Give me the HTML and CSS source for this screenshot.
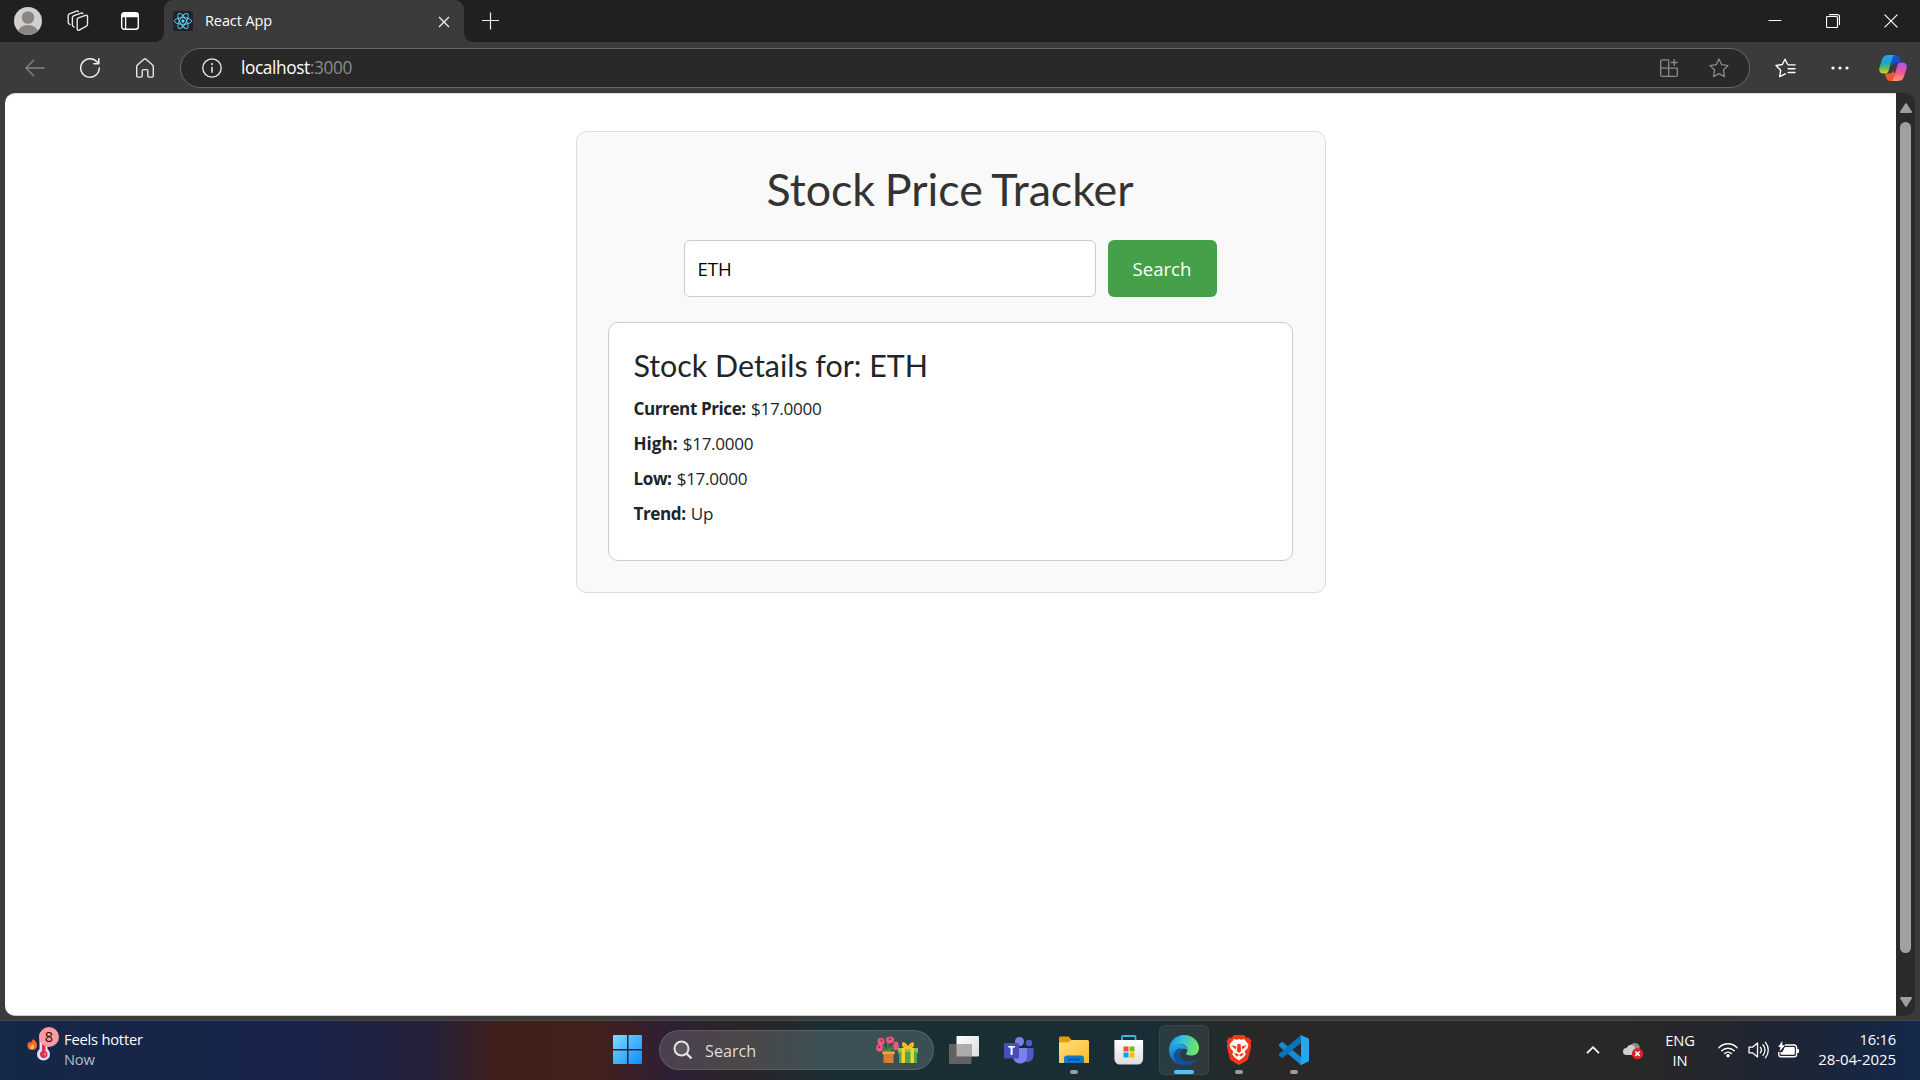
FILE: index.html
```html
<!DOCTYPE html>
<html lang="en">
<head>
<meta charset="utf-8">
<title>React App</title>
<link rel="stylesheet" href="styles.css">
</head>
<body>
<div class="browser">
  <header class="titlebar">
    <div class="cell avatar"><svg width="28" height="28" viewBox="0 0 28 28"><defs><clipPath id="av"><circle cx="14" cy="14" r="14"/></clipPath></defs><g clip-path="url(#av)"><rect width="28" height="28" fill="#d2d0ce"/><circle cx="14" cy="10.5" r="6.3" fill="#8a8683"/><ellipse cx="14" cy="26" rx="10.3" ry="8" fill="#8a8683"/></g></svg></div>
    <div class="cell spaces"><svg width="22" height="22" viewBox="0 0 22 22" fill="none" stroke="#e8e8e8" stroke-width="1.4" stroke-linejoin="round" stroke-linecap="round"><path d="M10.8 8.2 18.6 5.3c1-.3 1.9.2 1.9 1.2v8c0 .8-.4 1.3-1.1 1.6l-7.2 4c-1 .5-2 0-2-1V10c0-.9.1-1.5.6-1.8ZM7 17l-.9-.8c-.5-.4-.7-.8-.7-1.5V7.6c0-.8.4-1.4 1.1-1.7L14 3.2c.9-.3 1.5-.1 1.9.5M3 14.5l-1-.7c-.6-.4-.8-.8-.8-1.5V5.5c0-.8.4-1.3 1.1-1.6L9.5 1.1c.9-.3 1.5-.1 1.9.5"/></svg></div>
    <div class="cell vtabs"><svg width="18" height="18" viewBox="0 0 18 18"><rect x=".7" y=".7" width="16.6" height="16.6" rx="2.5" fill="none" stroke="#fff" stroke-width="1.4"/><path d="M.7 5.3V3A2.3 2.3 0 0 1 3 .7h12A2.3 2.3 0 0 1 17.3 3v2.3Z" fill="#fff"/><path d="M4.6 5v12" stroke="#fff" stroke-width="1.3"/></svg></div>
    <div class="tab">
      <svg width="20" height="20" viewBox="0 0 20 20"><rect width="20" height="20" rx="2" fill="#20232a"/><g fill="none" stroke="#61dafb" stroke-width=".9"><ellipse cx="10" cy="10" rx="8.6" ry="3.3"/><ellipse cx="10" cy="10" rx="8.6" ry="3.3" transform="rotate(60 10 10)"/><ellipse cx="10" cy="10" rx="8.6" ry="3.3" transform="rotate(120 10 10)"/></g><circle cx="10" cy="10" r="1.6" fill="#61dafb"/></svg>
      <span class="tab-name">React App</span>
      <svg class="close" width="12" height="12" viewBox="0 0 12 12"><path d="m1 1 10 10M11 1 1 11" stroke="#eee" stroke-width="1.4"/></svg>
    </div>
    <div class="cell newtab"><svg width="18" height="18" viewBox="0 0 18 18"><path d="M8.5 .5v17M0 8.5h17" stroke="#eee" stroke-width="1.2"/></svg></div>
    <div class="window-buttons">
      <span><svg width="14" height="14" viewBox="0 0 14 14"><path d="M.5 6.5h13" stroke="#fff"/></svg></span>
      <span><svg width="14" height="14" viewBox="0 0 14 14" fill="none" stroke="#fff"><rect x=".5" y="2.5" width="11" height="11" rx="1" stroke-width="1.2"/><path d="M3 .6h8.5a2 2 0 0 1 2 2V11" stroke-width="1.2"/></svg></span>
      <span><svg width="14" height="14" viewBox="0 0 14 14"><path d="m.6.6 12.8 12.8M13.4.6.6 13.4" stroke="#fff" stroke-width="1.2"/></svg></span>
    </div>
  </header>
  <nav class="toolbar">
    <div class="cell tool"><svg width="20" height="18" viewBox="0 0 20 18" fill="none" stroke="#858585" stroke-width="1.3"><path d="M19.5 9H1M9.2.7.9 9l8.3 8.3"/></svg></div>
    <div class="cell tool"><svg width="22" height="22" viewBox="0 0 22 22" fill="none" stroke="#eee" stroke-width="1.5" stroke-linecap="round" stroke-linejoin="round"><path d="M20.3 11A9.3 9.3 0 1 1 17.9 4.7L19.7 6.5M19.8 1.7v5h-5"/></svg></div>
    <div class="cell tool"><svg width="20" height="20" viewBox="0 0 20 20" fill="none" stroke="#e8e8e8" stroke-width="1.4" stroke-linejoin="round"><path d="M1.7 8.6c0-.7.2-1.1.7-1.5L9 1.2c.7-.6 1.4-.6 2 0l6.6 5.9c.5.4.7.8.7 1.5v9.2c0 .8-.5 1.3-1.3 1.3h-3c-.8 0-1.2-.5-1.2-1.3v-5.2c0-.6-.4-1-1-1H8.2c-.6 0-1 .4-1 1v5.2c0 .8-.4 1.3-1.2 1.3H3c-.8 0-1.3-.5-1.3-1.3Z"/></svg></div>
    <div class="address">
      <svg width="20" height="20" viewBox="0 0 20 20"><circle cx="10" cy="10" r="9.2" fill="none" stroke="#eee" stroke-width="1.3"/><path d="M10 8.800v6" stroke="#eee" stroke-width="1.5"/><circle cx="10" cy="5.9" r="1" fill="#eee"/></svg>
      <span class="url">localhost<span class="port">:3000</span></span>
      <svg class="apps" width="18" height="18" viewBox="0 0 18 18" fill="none" stroke="#8a8a8a" stroke-width="1.3"><path d="M8.7.8H2A1.3 1.3 0 0 0 .7 2v14A1.3 1.3 0 0 0 2 17.3h14a1.3 1.3 0 0 0 1.3-1.3V9.2H.7M8.7.8v16.5M14.2 0v7M10.7 3.5h7"/></svg>
      <svg width="20" height="20" viewBox="0 0 20 20" fill="none" stroke="#8a8a8a" stroke-width="1.3" stroke-linejoin="round"><path d="m10 1 2.7 5.7 6.3.9-4.6 4.4 1.1 6.6L10 15.6l-5.5 3L5.6 12 1 7.6l6.3-.9Z"/></svg>
    </div>
    <div class="cell favorites"><svg width="21" height="20" viewBox="0 0 21 20" fill="none" stroke="#fff" stroke-width="1.4" stroke-linejoin="round" stroke-linecap="round"><path d="M10.3 15.9 4.7 18.6 5.7 12.2 1 7.5l6.3-1L10 1.200l2.400 4.800M13.200 6.900H20M13.200 10.700H20M13.200 14.500H20"/></svg></div>
    <div class="cell more"><svg width="18" height="4" viewBox="0 0 18 4" fill="#fff"><circle cx="2" cy="2" r="1.6"/><circle cx="9" cy="2" r="1.6"/><circle cx="16" cy="2" r="1.6"/></svg></div>
    <div class="cell copilot"><svg width="28" height="26" viewBox="0 0 28 26"><defs><linearGradient id="c1" x1="0" y1="0" x2="0" y2="1"><stop offset="0" stop-color="#23a9f2"/><stop offset=".4" stop-color="#1b9fd0"/><stop offset=".72" stop-color="#61bf59"/><stop offset="1" stop-color="#f2c911"/></linearGradient><linearGradient id="c2" x1=".5" y1="0" x2=".4" y2="1"><stop offset="0" stop-color="#a456f1"/><stop offset=".5" stop-color="#ee5596"/><stop offset="1" stop-color="#ff9b62"/></linearGradient></defs><path d="M9 0h8c2 0 3.2 1.3 3.8 3.4l1.2 4h-4.5c-2 0-3 1-3.6 3Z" fill="#1750d8"/><path d="M19 26h-8c-2 0-3.2-1.3-3.8-3.4L6 18.5h4.5c2 0 3-1 3.6-3Z" fill="#f4533c"/><path d="M9.5 0H16c-1.5.2-2.3 1.5-3 4l-3.3 11.5c-.6 2.2-1.7 3.1-3.7 3.1H4.5C1 18.6-.5 16 .5 12.5L3 4.5C4 1.5 6 0 9.5 0Z" fill="url(#c1)"/><path d="M18.5 26H12c1.5-.2 2.3-1.5 3-4l3.3-11.5c.6-2.2 1.7-3.1 3.7-3.1h1.5c3.5 0 5 2.6 4 6.1L25 21.5c-1 3-3 4.5-6.5 4.5Z" fill="url(#c2)"/></svg></div>
  </nav>
  <div class="viewport">
    <main class="page">
      <section class="tracker">
        <h1>Stock Price Tracker</h1>
        <div class="search-form">
          <div class="symbol"><span>ETH</span></div>
          <div class="search-button"><span>Search</span></div>
        </div>
        <article class="details">
          <h2>Stock Details for: ETH</h2>
          <p><strong>Current Price:</strong> $17.0000</p>
          <p><strong class="high">High:</strong> $17.0000</p>
          <p><strong>Low:</strong> $17.0000</p>
          <p><strong>Trend:</strong> Up</p>
        </article>
      </section>
    </main>
    <aside class="scrollbar">
      <svg width="12" height="10" viewBox="0 0 12 10"><path d="M6 1.2 11 9H1Z" fill="#a0a0a0" stroke="#a0a0a0" stroke-width="2" stroke-linejoin="round"/></svg>
      <div class="thumb"></div>
      <svg width="12" height="10" viewBox="0 0 12 10"><path d="M6 8.8 11 1H1Z" fill="#a0a0a0" stroke="#a0a0a0" stroke-width="2" stroke-linejoin="round"/></svg>
    </aside>
  </div>
</div>
<footer class="taskbar">
  <div class="weather">
    <div class="weather-icon">
      <svg width="30" height="34" viewBox="0 0 30 34"><path d="M6 10c3 2 4 4 4 6.5S8 21 5 21s-4.600-2-4.600-4.500c0-2 1-3 1.800-4l1 1.500C4 13 5.500 12 6 10Z" fill="#f36b26"/><path d="M5.500 15c1.500 1.500 2 2.500 1.500 4-.5 1.200-3.500 1.200-4 0-.3-1.500 1.800-2 2.500-4Z" fill="#ffc15a"/><path d="M12.500 6c0-5 8-5 8 0v14a6.500 6.500 0 1 1-8 0Z" fill="#cde5f7"/><path d="M15 9h3.500v13a3.800 3.800 0 1 1-3.500 0Z" fill="#df314f"/><path d="M17 25.500 19 25" stroke="#ff91a2" stroke-width="1.3"/></svg>
      <span class="badge">8</span>
    </div>
    <div class="stack"><span>Feels hotter</span><span class="now">Now</span></div>
  </div>
  <div class="apps-row">
    <div class="tile start"><svg width="30" height="30" viewBox="0 0 30 30"><defs><linearGradient id="w" x1="0" y1="0" x2="1" y2="1"><stop offset="0" stop-color="#7fdcff"/><stop offset="1" stop-color="#0a8cff"/></linearGradient></defs><path d="M1 0h13v14H0V1a1 1 0 0 1 1-1Zm14.500 0H28a1 1 0 0 1 1 1v13H15.500ZM0 15.500h14V29H1a1 1 0 0 1-1-1Zm15.500 0H29V28a1 1 0 0 1-1 1H15.500Z" fill="url(#w)"/></svg></div>
    <div class="searchbox">
      <svg width="20" height="20" viewBox="0 0 20 20" fill="none"><circle cx="8.5" cy="8.5" r="7" fill="#777" fill-opacity=".4" stroke="#e4e4e4" stroke-width="2"/><path d="m13.5 13.5 5 5" stroke="#e4e4e4" stroke-width="2.4"/></svg>
      <span>Search</span>
      <svg width="43" height="28" viewBox="0 0 43 28"><path d="M12 15V6M11 15 5 8M11 15l8-7M11 15l-7-2M12 15l6-3" stroke="#458346" stroke-width="1.6"/><g fill="#ee5780"><ellipse cx="14" cy="4" rx="4" ry="3.4"/><ellipse cx="5" cy="5.5" rx="3.5" ry="3.7"/><ellipse cx="3.5" cy="12" rx="3.3" ry="3.7"/><ellipse cx="20" cy="10" rx="2.8" ry="4.5"/></g><g fill="#a82e5c"><circle cx="14" cy="3" r="1.3"/><circle cx="5.5" cy="4.5" r="1.2"/><circle cx="3" cy="11" r="1.2"/></g><path d="M6.500 15.500h12v3h-1V27h-10v-8.500h-1Z" fill="#d77e31"/><path d="M6.500 15.500h12v2.500h-12Z" fill="#f0a151"/><path d="M22 12h20v6h-1v9H23v-9h-1Z" fill="#4ba74a"/><path d="M22 12h20v4H22Z" fill="#81c84d"/><path d="M25.500 12h3.500v15h-3.500ZM34.500 12H38v15h-3.500Z" fill="#ffd02f"/><path d="M32 12c-3-5-5-5.500-5-4s1 4 5 4c4 0 5-2.500 5-4s-2-1-5 4Z" fill="none" stroke="#ffc421" stroke-width="2"/></svg>
    </div>
    <div class="tile"><svg width="30" height="28" viewBox="0 0 30 28"><defs><linearGradient id="tv" x1="0" y1="0" x2="1" y2="1"><stop offset="0" stop-color="#fff"/><stop offset="1" stop-color="#ddd"/></linearGradient></defs><rect x="7.5" y="0" width="22.5" height="20.5" rx="1" fill="url(#tv)"/><rect x="0" y="8" width="22.5" height="20" rx="1" fill="#626262"/><path d="M7.500 8h15v12.500h-15Z" fill="#acacac"/></svg></div>
    <div class="tile"><svg width="30" height="27" viewBox="0 0 30 27"><circle cx="25" cy="6" r="3.2" fill="#5059c9"/><path d="M20 11h9.500v7.500c0 4-3 6.500-6.500 6.500h-3Z" fill="#5059c9"/><circle cx="15.5" cy="4.5" r="4.5" fill="#7b83eb"/><path d="M9 11h14v8c0 10-14 10-14 0Z" fill="#7b83eb"/><rect y="6" width="15" height="15.5" rx="1.3" fill="#464eb8"/><text x="7.5" y="18" class="teams-t">T</text></svg></div>
    <div class="tile running"><svg width="30" height="28" viewBox="0 0 30 28"><defs><linearGradient id="fd" x1="0" y1="0" x2="1" y2="1"><stop offset="0" stop-color="#ffe083"/><stop offset="1" stop-color="#fdb827"/></linearGradient></defs><path d="M0 1.500A1.500 1.500 0 0 1 1.500.5h8l3.500 4V9H0Z" fill="#e1a00b"/><path d="M0 6.500h9l3.500-2.500h16A1.500 1.500 0 0 1 30 5.500V27H0Z" fill="url(#fd)"/><path d="M5 27v-4.500A3 3 0 0 1 8 19.500h14a3 3 0 0 1 3 3V27Z" fill="#1377c9"/><path d="M9 23.500h12" stroke="#084d8e" stroke-width="1.5"/></svg></div>
    <div class="tile"><svg width="30" height="30" viewBox="0 0 30 30"><defs><linearGradient id="st" x1="0" y1="0" x2="0" y2="1"><stop offset="0" stop-color="#fff"/><stop offset="1" stop-color="#ddd"/></linearGradient></defs><path d="M8 6V2a1 1 0 0 1 1-1h11.500a1 1 0 0 1 1 1v4" fill="none" stroke="#30b9ed" stroke-width="1.8"/><path d="M1 5h27.500a.6.6 0 0 1 .6.6V24a5.500 5.500 0 0 1-5.500 5.500H6A5.500 5.500 0 0 1 .4 24V5.600A.6.6 0 0 1 1 5Z" fill="url(#st)"/><path d="M9.500 11.500h5v5h-5Z" fill="#f35325"/><path d="M15.500 11.500h5v5h-5Z" fill="#81bc06"/><path d="M9.500 17.500h5v5h-5Z" fill="#05a6f0"/><path d="M15.500 17.500h5v5h-5Z" fill="#ffba08"/></svg></div>
    <div class="tile active"><svg width="30" height="30" viewBox="0 0 30 30"><defs><linearGradient id="e1" x1="0" y1=".3" x2="1" y2=".5"><stop offset="0" stop-color="#2391dd"/><stop offset=".4" stop-color="#35c1de"/><stop offset="1" stop-color="#72e75c"/></linearGradient><linearGradient id="e2" x1="0" y1="0" x2="0" y2="1"><stop offset="0" stop-color="#25a7e8"/><stop offset="1" stop-color="#0b5eb5"/></linearGradient></defs><path d="M0 15C0 6.500 6.500 0 15 0s15 6 15 13c0 5-3.500 7.500-8 7.500-3.500 0-5-1-5-2 0-.8 1.500-1.200 1.500-3.500 0-3-3-6-7.500-6C6 9 1 11.500 0 15Z" fill="url(#e1)"/><path d="M0 15C.5 11.500 4 9 8.500 9c5.500 0 9.800 2.500 9.800 6.500-1.500-2.500-5-2.500-7 0-2.500 3.500 0 9 5 10.500L15 30C6.500 30 0 23.500 0 15Z" fill="url(#e2)"/><path d="M13 12.800C9.500 15 9 20.500 13 24c3.500 3 10 3 14 .3.7-.5 1.200 0 .7.7-2.700 3.400-7.200 5.400-12.700 5-6.500-.5-11-5.500-10-10.500.7-3.500 3.500-6.500 8-6.700Z" fill="#124f97"/></svg></div>
    <div class="tile running"><svg width="26" height="30" viewBox="0 0 26 30"><path d="M8 0h10l2.500 2.700 2.300-.3L25.500 6l-1 2.500.8 2.500-3 12c-.4 1.400-1 2.200-2.200 3L13 30l-7.100-4c-1.200-.8-1.800-1.600-2.200-3L.7 11l.8-2.500L.5 6l2.700-3.600 2.300.3Z" fill="#f5351b"/><path d="m8 4 3 .8L13 4l2 .8L18 4l4.500 5.500-.8 3.500-3 3.500 1 3-2.500 3-4.200 3-4.200-3-2.500-3 1-3-3-3.500-.8-3.500Z" fill="#fff"/><path d="m5 10 5.500 1.500-1 3Zm16 0-5.500 1.500 1 3ZM11.500 9h3l.7 7-2.200 2-2.200-2Z" fill="#f5351b"/><path d="m8 18 3.500.8L13 20l1.500-1.200L18 18l-2.500 3.500h-5Z" fill="#f5351b"/><path d="m11 21 2-.8 2 .8-2 1.600Z" fill="#fff"/></svg></div>
    <div class="tile running"><svg width="30" height="30" viewBox="0 0 30 30"><path d="M0 9.500 2.500 7.200c.4-.3 1-.3 1.400 0L22 22v8L.4 11.500c-.5-.5-.8-1.400-.4-2Z" fill="#168bd2"/><path d="M0 20.300 2.500 22.800c.4.300 1 .3 1.400 0L22 8V0L.4 18.500c-.5.500-.8 1.300-.4 1.800Z" fill="#0773bb"/><path d="M22 .2 29 3.300c.6.300 1 .8 1 1.500v20.400c0 .7-.4 1.200-1 1.500l-7 3.200c-.8.300-1.500 0-2-.5 1 .8 2 .2 2-1V1.600c0-1.200-1-1.800-2-1 .5-.5 1.200-.7 2-.4Z" fill="#27a7f0"/></svg></div>
  </div>
  <div class="tray">
    <svg class="chevron" width="14" height="8" viewBox="0 0 14 8"><path d="m1 7.200 6-6 6 6" fill="none" stroke="#fff" stroke-width="1.7"/></svg>
    <svg class="cloud" width="21" height="18" viewBox="0 0 21 18"><path d="M6 6C7 1 14-1 16.500 4L17 10H6Z" fill="#8c8c8c"/><path d="M3.500 13a3.500 3.500 0 0 1 0-7 5 5 0 0 1 8.500-1l-1 8Z" fill="#cfcfcf"/><circle cx="14.5" cy="11.7" r="5.6" fill="#d9232e"/><path d="m12.300 9.500 4.400 4.400M16.700 9.500l-4.400 4.400" stroke="#fff" stroke-width="1.5"/></svg>
    <div class="stack lang"><span>ENG</span><span>IN</span></div>
    <svg class="wifi" width="20" height="16" viewBox="0 0 20 16" fill="none" stroke="#fff" stroke-width="1.5" stroke-linecap="round"><path d="M1 5.700a12.500 12.500 0 0 1 18 0M3.800 8.800a8.700 8.700 0 0 1 12.400 0M6.700 11.500a4.800 4.800 0 0 1 6.600 0"/><circle cx="10" cy="13.8" r="1" fill="#fff"/></svg>
    <svg class="volume" width="21" height="18" viewBox="0 0 21 18" fill="none" stroke="#fff" stroke-width="1.3" stroke-linecap="round" stroke-linejoin="round"><path d="M1 6.200h3.500L9.500 2v14l-5-4.200H1ZM12.300 6.200c1.300 1.600 1.300 4 0 5.600M15 3.700c2.600 3 2.600 7.600 0 10.600M17.500 1.300c3.700 4.400 3.700 11 0 15.400"/></svg>
    <svg class="battery" width="21" height="17" viewBox="0 0 21 17"><path d="M7 4h9.300A2.300 2.300 0 0 1 18.600 6.300v7.200a2.300 2.300 0 0 1-2.300 2.300H3A2.300 2.300 0 0 1 .8 13.500V11" fill="none" stroke="#fff" stroke-width="1.4"/><path d="M6.800 6h8.700c.8 0 1.300.5 1.300 1.300v5.200c0 .8-.5 1.300-1.300 1.300H3.800c-.8 0-1.300-.5-1.300-1.300V11h2ZM19 8h1c.6 0 1 .4 1 1v2c0 .6-.4 1-1 1h-1ZM4.200 0 .2 6h2.300l-1 4.500L7 4.200H4.400Z" fill="#fff"/></svg>
    <div class="stack clock"><span class="time">16:16</span><span class="date">28-04-2025</span></div>
  </div>
</footer>
</body>
</html>
```
FILE: styles.css
```css
* { box-sizing: border-box; }

body {
  margin: 0;
  width: 1920px;
  height: 1080px;
  overflow: hidden;
  display: flex;
  flex-direction: column;
  background: #3b3b3b;
  font-family: "Open Sans", "Noto Sans", sans-serif;
  color: #fff;
}

svg { display: block; flex: none; }

.browser {
  height: 1020px;
  display: flex;
  flex-direction: column;
}

/* Tab strip */
.titlebar {
  display: flex;
  height: 42px;
  background: #202020;
}

.cell {
  display: flex;
  align-items: center;
  justify-content: center;
  flex: none;
}

.avatar { width: 56px; }
.spaces { width: 44px; }
.vtabs { width: 60px; }

.tab {
  position: relative;
  display: flex;
  align-items: center;
  width: 300px;
  margin-left: 4px;
  padding: 0 14px 0 9px;
  background: #3b3b3b;
  border-radius: 9px 9px 0 0;
}

.tab::before,
.tab::after {
  content: "";
  position: absolute;
  bottom: 0;
  width: 9px;
  height: 9px;
}

.tab::before {
  left: -9px;
  background: radial-gradient(circle at 0 0, #202020 8.5px, #3b3b3b 9px);
}

.tab::after {
  right: -9px;
  background: radial-gradient(circle at 100% 0, #202020 8.5px, #3b3b3b 9px);
}

.tab-name {
  flex: 1;
  margin-left: 12px;
  font-size: 14.5px;
  line-height: 20px;
  letter-spacing: -0.1px;
}

.close { margin-top: 2px; }
.newtab { width: 53px; }

.window-buttons {
  display: flex;
  margin-left: auto;
}

.window-buttons span {
  display: flex;
  align-items: center;
  justify-content: center;
  width: 58px;
}

/* Navigation toolbar */
.toolbar {
  display: flex;
  align-items: center;
  height: 51px;
  padding: 0 13px 0 7px;
}

.tool { width: 55px; }

.address {
  display: flex;
  align-items: center;
  width: 1570px;
  height: 40px;
  margin-left: 8px;
  padding: 0 20px 0 21px;
  border: 1px solid #686868;
  border-radius: 20px;
  background: #292929;
}

.url {
  flex: 1;
  margin-left: 19px;
  font-size: 17.3px;
  line-height: 24px;
  letter-spacing: -0.4px;
}

.port { color: #8b8b8b; }
.apps { margin-right: 31px; }
.favorites { width: 70px; }
.more { width: 40px; }
.copilot { margin-left: auto; }

/* Page area */
.viewport {
  display: flex;
  height: 923px;
  margin: 0 5px;
}

.page {
  width: 1891px;
  padding-top: 37px;
  background: #fff;
  border-radius: 10px 0 0 10px;
  border-top: 1px solid #ddd;
  border-bottom: 1px solid #ccc;
}

.tracker {
  width: 750px;
  height: 462px;
  margin: 0 auto;
  padding: 31px 32px 31px 31px;
  border: 1px solid #ddd;
  border-radius: 10px;
  background: #f9f9f9;
}

h1, h2, p { margin: 0; }

h1, h2 {
  font-family: Lato, sans-serif;
  font-weight: 400;
}

h1 {
  margin-top: -1px;
  color: #333;
  font-size: 44.8px;
  line-height: 54px;
  letter-spacing: -0.05px;
  word-spacing: -1.6px;
  text-align: center;
}

.search-form {
  display: flex;
  justify-content: center;
  gap: 12px;
  height: 57px;
  margin: 24px 0 25px;
  font-size: 18.6px;
}

.symbol {
  display: flex;
  align-items: center;
  width: 412px;
  padding: 0 13px;
  border: 1px solid #ccc;
  border-radius: 6px;
  background: #fff;
  color: #000;
}

.search-button {
  display: flex;
  align-items: center;
  justify-content: center;
  width: 109px;
  border-radius: 6px;
  background: #45a049;
}

.details {
  height: 239px;
  padding: 24px 25px;
  border: 1px solid #ccc;
  border-radius: 10px;
  background: #fff;
  color: #212529;
}

h2 {
  margin-bottom: 7px;
  font-size: 30.4px;
  line-height: 37px;
}

.details p {
  font-size: 17.1px;
  line-height: 35px;
  letter-spacing: -0.3px;
}

.details strong {
  margin-right: 1px;
  font-weight: 700;
  letter-spacing: -0.43px;
}

.details .high { letter-spacing: 0; }

/* Scrollbar */
.scrollbar {
  display: flex;
  flex-direction: column;
  align-items: center;
  justify-content: space-between;
  width: 19px;
  padding: 10px 0 9px;
  border-radius: 0 10px 10px 0;
  background: #2b2b2b;
}

.thumb {
  width: 11px;
  height: 831px;
  margin-bottom: 35px;
  border-radius: 6px;
  background: #a0a0a0;
}

/* Taskbar */
.taskbar {
  display: grid;
  grid-template-columns: 602px 717px 601px;
  height: 60px;
  border-top: 1px solid #484848;
  background: linear-gradient(90deg, #152847 0, #18234a 300px, #26203a 430px, #40201a 500px, #44201a 590px, #2e1f35 670px, #2a2429 740px, #1a2e34 830px, #192e34 1160px, #292827 1260px, #292826 1620px, #1e2533 1780px, #14284b 1920px);
}

.weather {
  display: flex;
  padding: 6px 0 0 27px;
}

.weather-icon { position: relative; width: 37px; padding-top: 2px; }

.badge {
  position: absolute;
  left: 12px;
  top: 0;
  width: 20px;
  height: 20px;
  border-radius: 50%;
  background: #ff99a4;
  color: #111;
  font-size: 14.5px;
  line-height: 20px;
  text-align: center;
}

.stack {
  display: flex;
  flex-direction: column;
  font-size: 14.7px;
  line-height: 20px;
  letter-spacing: -0.2px;
}

.weather .stack { padding-top: 2px; }
.now { color: #b9bdcc; }

.apps-row {
  display: flex;
  align-items: center;
  gap: 5px;
  padding-bottom: 1px;
}

.tile {
  position: relative;
  display: flex;
  align-items: center;
  justify-content: center;
  width: 50px;
  height: 50px;
  border-radius: 6px;
}

.start { margin-right: 2px; padding-left: 2px; }

.active {
  background: #ffffff12;
  border: 1px solid #ffffff10;
}

.running::after,
.active::after {
  content: "";
  position: absolute;
  bottom: 1px;
  left: 21px;
  width: 8px;
  height: 4px;
  border-radius: 2px;
  background: #9a9d9e;
}

.active::after { bottom: 0; left: 14px; width: 20px; background: #4cc2ff; }

.teams-t {
  fill: #fff;
  font: 700 12px "Open Sans", sans-serif;
  text-anchor: middle;
}

.searchbox {
  display: flex;
  align-items: center;
  width: 275px;
  height: 40px;
  padding: 0 14px 0 13px;
  border: 1px solid #ffffff20;
  border-radius: 20px;
  background: linear-gradient(90deg, #4a4050, #4b4747 30%, #3c5055 60%, #3a4e53);
  font-size: 16.2px;
}

.searchbox span { flex: 1; margin: 1px 0 0 12px; color: #ddd; }

.tray { display: flex; align-items: center; padding-bottom: 2px; }
.chevron { margin-left: 267px; }
.cloud { margin-left: 23px; margin-top: 3px; }
.lang { width: 44px; margin-left: 14px; padding-top: 1px; align-items: center; }
.wifi { margin-left: 16px; }
.volume { margin-left: 10px; }
.battery { margin-left: 9px; }
.clock { margin-left: auto; margin-right: 24px; padding-bottom: 2px; align-items: flex-end; }
.date { font-size: 15px; letter-spacing: -0.05px; }
```
